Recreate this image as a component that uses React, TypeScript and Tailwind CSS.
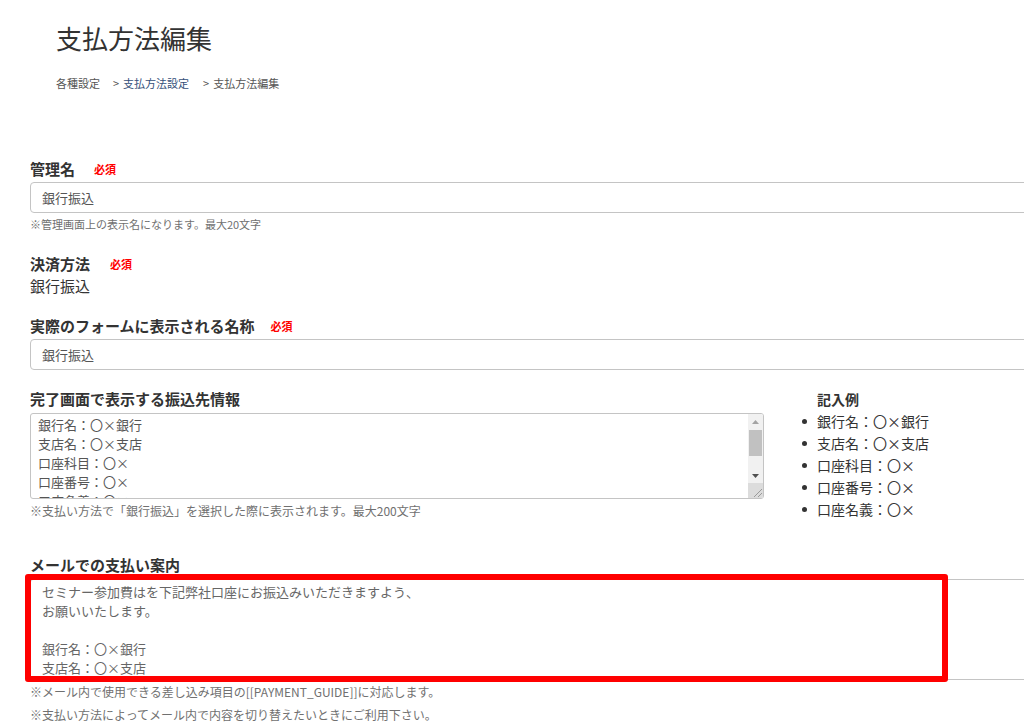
import React from 'react';

const Required: React.FC<{ gap?: string }> = ({ gap = 'ml-[19px]' }) => (
  <span className={`${gap} text-[11px] font-bold text-[#ff0000] leading-[20px]`}>必須</span>
);

const FieldLabel: React.FC<{ text: string; required?: boolean; gap?: string }> = ({ text, required, gap }) => (
  <div className="flex items-center h-[20px]">
    <span className="text-[15px] font-bold leading-[20px] text-[#333]">{text}</span>
    {required && <Required gap={gap} />}
  </div>
);

const TextBox: React.FC<{ value: string }> = ({ value }) => (
  <div className="mt-[3px] h-[31px] w-[1060px] border border-[#c4c4c4] rounded-[4px] pl-[11px] flex items-center text-[13px] text-[#555]">
    {value}
  </div>
);

const HelpText: React.FC<{ children: React.ReactNode; className?: string }> = ({ children, className = '' }) => (
  <p className={`leading-[16px] text-[#707070] ${className}`}>{children}</p>
);

const bankLines = ['銀行名：〇×銀行', '支店名：〇×支店', '口座科目：〇×', '口座番号：〇×', '口座名義：〇×'];

const FakeScrollbar: React.FC = () => (
  <div className="w-[15px] flex flex-col bg-[#f1f1f1]">
    <div className="h-[15px] flex items-center justify-center">
      <svg width="7" height="4" viewBox="0 0 7 4">
        <path d="M0 4 L3.5 0 L7 4 Z" fill="#a3a3a3" />
      </svg>
    </div>
    <div className="flex-1 flex flex-col px-[1px] pt-[1px]">
      <div className="h-[26px] bg-[#c1c1c1]" />
    </div>
    <div className="h-[15px] flex items-center justify-center">
      <svg width="7" height="4" viewBox="0 0 7 4">
        <path d="M0 0 L7 0 L3.5 4 Z" fill="#505050" />
      </svg>
    </div>
    <div className="h-[15px] bg-[#dcdcdc] relative">
      <svg className="absolute right-[1px] bottom-[1px]" width="10" height="10" viewBox="0 0 10 10">
        <path d="M2 10 L10 2 M6 10 L10 6" stroke="#9a9a9a" strokeWidth="1" />
      </svg>
    </div>
  </div>
);

const App: React.FC = () => {
  return (
    <div className="w-[1024px] h-[725px] overflow-hidden bg-white text-[#333] font-['Noto_Sans_CJK_JP','Noto_Sans',sans-serif]">
      <div className="pl-[56px] pt-[20px]">
        <h1 className="text-[26px] leading-[36px] font-normal text-[#333]">支払方法編集</h1>
        <nav className="mt-[19px] flex text-[11px] leading-[16px] text-[#555]">
          <span>各種設定</span>
          <span className="ml-[13px]">&gt;</span>
          <span className="ml-[4px] text-[#35507a]">支払方法設定</span>
          <span className="ml-[14px]">&gt;</span>
          <span className="ml-[4px]">支払方法編集</span>
        </nav>
      </div>

      <div className="pl-[30px] mt-[68px]">
        {/* 管理名 */}
        <FieldLabel text="管理名" required />
        <TextBox value="銀行振込" />
        <HelpText className="mt-[3px] text-[11px]">※管理画面上の表示名になります。最大20文字</HelpText>

        {/* 決済方法 */}
        <div className="mt-[22px]">
          <FieldLabel text="決済方法" required gap="ml-[20px]" />
          <p className="mt-[2px] text-[15px] leading-[20px] text-[#333]">銀行振込</p>
        </div>

        {/* 表示名称 */}
        <div className="mt-[20px]">
          <FieldLabel text="実際のフォームに表示される名称" required gap="ml-[16px]" />
          <TextBox value="銀行振込" />
        </div>

        {/* 振込先情報 + 記入例 */}
        <div className="mt-[19px] flex items-start">
          <div className="w-[734px]">
            <FieldLabel text="完了画面で表示する振込先情報" />
            <div className="mt-[4px] h-[86px] border border-[#c4c4c4] rounded-[3px] flex overflow-hidden">
              <div className="flex-1 h-[84px] pl-[7px] pt-[1px] text-[13px] leading-[19px] text-[#555] overflow-hidden">
                {bankLines.map((line) => (
                  <div key={line}>{line}</div>
                ))}
              </div>
              <FakeScrollbar />
            </div>
            <HelpText className="mt-[4px] text-[12px]">※支払い方法で「銀行振込」を選択した際に表示されます。最大200文字</HelpText>
          </div>
          <div className="ml-[37px] -mt-[1px]">
            <p className="pl-[16px] text-[14px] font-bold leading-[22px] text-[#333]">記入例</p>
            <ul>
              {bankLines.map((line) => (
                <li key={line} className="flex items-center h-[22px] text-[14px] text-[#333]">
                  <span className="ml-[1px] w-[5px] h-[5px] rounded-full bg-[#333]" />
                  <span className="ml-[10px]">{line}</span>
                </li>
              ))}
            </ul>
          </div>
        </div>

        {/* メール案内 */}
        <div className="mt-[35px]">
          <FieldLabel text="メールでの支払い案内" />
          <div className="relative mt-[4px]">
            <div className="h-[101px] w-[1060px] border border-[#c4c4c4] rounded-[3px] pl-[11px] pt-[2px] text-[13px] leading-[19px] text-[#666] overflow-hidden">
              <div>セミナー参加費はを下記弊社口座にお振込みいただきますよう、</div>
              <div>お願いいたします。</div>
              <div className="h-[19px]" />
              <div>銀行名：〇×銀行</div>
              <div>支店名：〇×支店</div>
            </div>
            <div className="absolute left-[-5px] top-[-5px] w-[923px] h-[108px] border-[6px] border-[#ff0000] rounded-[3px]" />
          </div>
          <div className="text-[12px] leading-[23px] text-[#707070]">
            <p>※メール内で使用できる差し込み項目の[[PAYMENT_GUIDE]]に対応します。</p>
            <p>※支払い方法によってメール内で内容を切り替えたいときにご利用下さい。</p>
          </div>
        </div>
      </div>
    </div>
  );
};

export default App;
